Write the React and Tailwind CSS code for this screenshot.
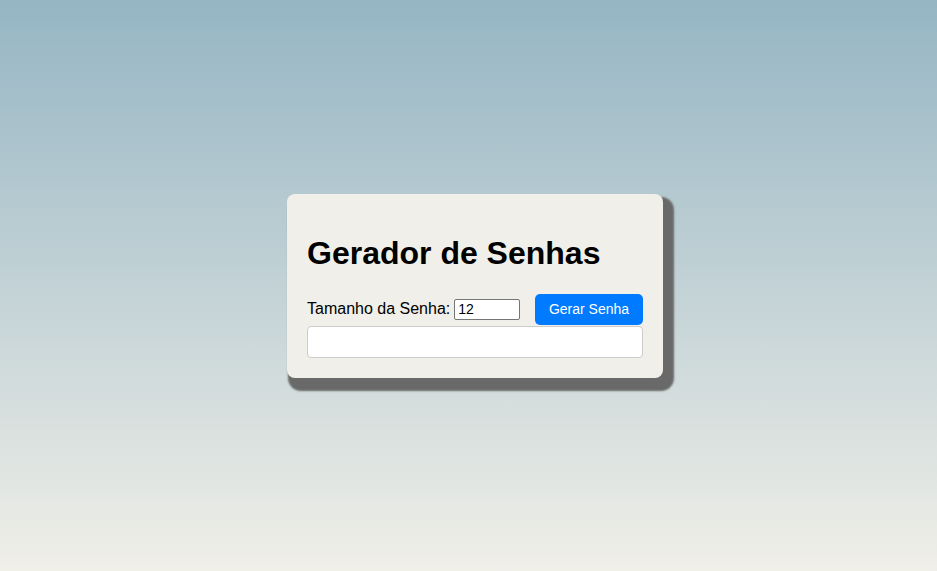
import { useState } from 'react';

function gerar(tamanho) {
    const chars = 'ABCDEFGHIJKLMNOPQRSTUVWXYZabcdefghijklmnopqrstuvwxyz0123456789!@#$%&*';
    let s = '';
    for (let i = 0; i < tamanho; i++) s += chars[Math.floor(Math.random() * chars.length)];
    return s;
}

export default function App() {
    const [tamanho, setTamanho] = useState(12);
    const [senha, setSenha] = useState('');

    return (
        <div className="min-h-screen flex items-center justify-center pl-[13px] bg-gradient-to-b from-[#95b5c3] to-[#f0efe8] font-['Liberation_Sans',Arial,sans-serif]">
            <div className="w-[376px] p-5 bg-[#f0efe9] rounded-[8px] shadow-[6px_8px_2px_5px_#696969]">
                <h1 className="text-[32px] leading-[37px] font-bold text-black mt-[21px] mb-[22px]">Gerador de Senhas</h1>
                <div className="flex items-center justify-between">
                    <div className="flex items-center text-base text-black">
                        <label htmlFor="tamanho">Tamanho da Senha:</label>
                        <input
                            id="tamanho"
                            type="number"
                            value={tamanho}
                            onChange={(e) => setTamanho(e.target.value)}
                            className="ml-1 w-[66px] h-[21px] border border-[#767676] rounded-[2px] bg-white px-[3px] text-sm text-black outline-none [appearance:textfield]"
                        />
                    </div>
                    <button
                        onClick={() => setSenha(gerar(Number(tamanho) || 12))}
                        className="w-[108px] h-[31px] bg-[#007bff] text-white text-sm rounded-[5px]"
                    >
                        Gerar Senha
                    </button>
                </div>
                <div className="mt-px h-[32px] bg-white border border-[#cccccc] rounded-[4px] px-2 flex items-center text-base">
                    {senha}
                </div>
            </div>
        </div>
    );
}
